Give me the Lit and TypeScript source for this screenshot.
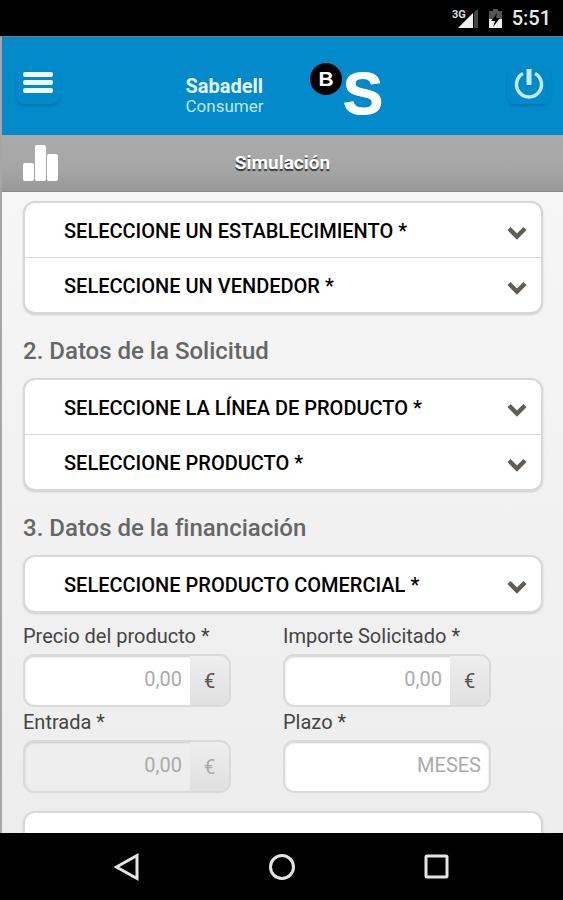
import { LitElement, html, css, svg } from "lit";
import { customElement, property } from "lit/decorators.js";

@customElement("select-row")
class SelectRow extends LitElement {
  @property() text = "";

  static styles = css`
    :host {
      display: block;
    }
    .row {
      display: grid;
      grid-template-columns: 1fr auto;
      align-items: center;
    }
    .select {
      grid-area: 1 / 1 / 2 / 3;
      appearance: none;
      width: 100%;
      height: 54px;
      margin: 0;
      padding: 1px 56px 0 39px;
      border: 0;
      background: transparent;
      color: #000;
      font: 500 20px Roboto, sans-serif;
    }
    .arrow {
      grid-area: 1 / 2 / 2 / 3;
      z-index: 1;
      margin: 6px 14px 0 0;
      pointer-events: none;
    }
  `;

  render() {
    return html`
      <div class="row">
        <select class="select" aria-label=${this.text}>
          <option>${this.text}</option>
        </select>
        <svg class="arrow" width="20" height="14" viewBox="0 0 20 14" aria-hidden="true">
          <path d="M2 2.500 L10 10.500 L18 2.500" fill="none" stroke="#625e57" stroke-width="4.500" />
        </svg>
      </div>
    `;
  }
}

@customElement("amount-field")
class AmountField extends LitElement {
  @property() label = "";
  @property() hint = "0,00";
  @property() unit = "";
  @property({ type: Boolean }) disabled = false;

  static styles = css`
    :host {
      display: block;
    }
    .label {
      display: block;
      color: #444;
      font: 400 20px/30px Roboto, sans-serif;
    }
    .box {
      display: flex;
      box-sizing: border-box;
      width: 80%;
      height: 53px;
      margin: 3px 0 0;
      border: 2px solid #dadada;
      border-radius: 11px;
      background: #fff;
      overflow: hidden;
      box-shadow: inset 0 1px 2px #ccc;
    }
    .box.off {
      background: #eee;
    }
    .input {
      flex: 1;
      min-width: 0;
      padding: 0 8px 4px;
      border: 0;
      background: transparent;
      text-align: right;
      font: 400 20px Roboto, sans-serif;
    }
    .input::placeholder {
      color: #aaa;
      opacity: 1;
    }
    .unit {
      display: grid;
      place-items: center;
      width: 39px;
      background: linear-gradient(#eee, #e0e0e0);
      color: #555;
      font: 400 20px Roboto, sans-serif;
    }
    .off .unit {
      color: #aaa;
    }
  `;

  render() {
    return html`
      <label class="label" for="value">${this.label}</label>
      <div class="box ${this.disabled ? "off" : ""}">
        <input class="input" id="value" type="text" placeholder=${this.hint} ?disabled=${this.disabled} />
        ${this.unit ? html`<span class="unit">${this.unit}</span>` : ""}
      </div>
    `;
  }
}

@customElement("app-root")
class AppRoot extends LitElement {
  static styles = css`
    :host {
      display: flex;
      flex-direction: column;
      height: 100vh;
      background: #000;
      font-family: Roboto, sans-serif;
    }
    .status {
      display: flex;
      justify-content: flex-end;
      align-items: center;
      height: 36px;
      padding-right: 12px;
      color: #e8e8e8;
      font-size: 20px;
      font-weight: 500;
    }
    .status-icons {
      margin-right: 9px;
    }
    .app {
      flex: 1;
      min-height: 0;
      display: flex;
      flex-direction: column;
      overflow: hidden;
      border-left: 2px solid #a6a6a6;
      border-top: 1px solid #777;
      background: linear-gradient(#f8f8f8, #ededed);
    }
    .header {
      flex: none;
      display: flex;
      justify-content: space-between;
      align-items: center;
      box-sizing: border-box;
      height: 98px;
      padding: 0 12px 0 14px;
      background: #028aca;
    }
    .icon-button {
      display: grid;
      place-items: center;
      width: 44px;
      height: 36px;
      padding: 0;
      border: 0;
      border-radius: 8px;
      background: #0289c8;
      box-shadow: 0 2px 2px #0278b0;
    }
    .logo {
      display: flex;
      align-items: flex-end;
      gap: 46px;
    }
    .brand {
      display: flex;
      flex-direction: column;
      font-size: 17px;
      line-height: 20px;
      color: #c4e8fb;
    }
    .brand-name {
      font-size: 20px;
      color: #e6f6ff;
    }
    .emblem {
      overflow: visible;
    }
    .title-bar {
      flex: none;
      display: grid;
      grid-template-columns: 60px 1fr 60px;
      align-items: center;
      height: 57px;
      box-sizing: border-box;
      border-bottom: 1px solid #888;
      background: linear-gradient(#ababab, #a6a6a6 60%, #989898);
    }
    .chart {
      margin-left: 21px;
    }
    .title {
      margin: 0;
      text-align: center;
      color: #fff;
      font-size: 19px;
      font-weight: 700;
      line-height: 24px;
      text-shadow: 0 2px 1px #333;
    }
    .content {
      padding: 9px 20px 0 21px;
    }
    .card {
      border: 2px solid #d8d8d8;
      border-radius: 12px;
      background: #fff;
      box-shadow: 0 1px 2px #ccc;
    }
    .card select-row + select-row {
      border-top: 1px solid #d8d8d8;
    }
    .heading {
      margin: 19px 0 8px;
      color: #666;
      font-size: 24px;
      font-weight: 500;
      line-height: 37px;
      font-variant-ligatures: none;
    }
    .fields {
      display: grid;
      grid-template-columns: repeat(2, minmax(0, 1fr));
      margin: 8px 0 18px;
    }
    .nav {
      flex: none;
      display: flex;
      justify-content: center;
      align-items: center;
      gap: 115px;
      height: 67px;
    }
    .nav-button {
      width: 40px;
      height: 40px;
      padding: 0;
      border: 0;
      background: none;
    }
  `;

  private navIcon(name: string, shape: unknown) {
    return html`
      <button class="nav-button" aria-label=${name}>
        <svg width="40" height="40" viewBox="0 0 40 40" fill="none" stroke="#e4e4e4" stroke-width="3">${shape}</svg>
      </button>
    `;
  }

  render() {
    return html`
      <div class="status">
        <svg class="status-icons" width="52" height="24" viewBox="0 0 52 24" aria-hidden="true">
          <path d="M22 7 V22 H7 Z" fill="#eee" />
          <path d="M23 6 L27 3 V22 H23 Z" fill="#444" />
          <text x="1" y="12" fill="#ddd" font-size="11" font-weight="700">3G</text>
          <path d="M38 5 H42 V3 H47 V5 H51 V13 H38 Z" fill="#555" />
          <path d="M38 13 H51 V22 H38 Z" fill="#eee" />
          <path d="M46 7 L40 15 H44 L42 21 L49 12 H45 Z" fill="#000" />
        </svg>
        <span>5:51</span>
      </div>
      <div class="app">
        <header class="header">
          <button class="icon-button" aria-label="Menú">
            <svg width="30" height="30" viewBox="0 0 30 30" fill="#eef8ff">
              <rect y="1" width="30" height="5" rx="2" />
              <rect y="9" width="30" height="5" rx="2" />
              <rect y="17" width="30" height="5" rx="2" />
            </svg>
          </button>
          <div class="logo">
            <div class="brand">
              <strong class="brand-name">Sabadell</strong>
              <span>Consumer</span>
            </div>
            <svg class="emblem" width="72" height="60" viewBox="0 0 72 60" font-family="Liberation Sans, sans-serif" font-weight="700" fill="#fff">
              <circle cx="17" cy="23" r="16" fill="#000" />
              <text x="17" y="30" font-size="21" text-anchor="middle">B</text>
              <text x="54" y="58" font-size="60" text-anchor="middle" stroke="#fff">S</text>
            </svg>
          </div>
          <button class="icon-button" aria-label="Salir">
            <svg width="32" height="36" viewBox="0 0 32 36" fill="none" stroke="#c4ebfc">
              <path d="M10 5.500 A12.500 12.500 0 1 0 22 5.500" stroke-width="3.500" />
              <path d="M16 1 V17" stroke-width="5" />
            </svg>
          </button>
        </header>
        <div class="title-bar">
          <svg class="chart" width="36" height="36" viewBox="0 0 36 36" fill="#fff" aria-hidden="true">
            <rect y="18" width="11" height="18" rx="2" />
            <rect x="12" width="11" height="36" rx="2" />
            <rect x="24" y="9" width="11" height="27" rx="2" />
          </svg>
          <h1 class="title">Simulación</h1>
        </div>
        <main class="content">
          <div class="card">
            <select-row text="SELECCIONE UN ESTABLECIMIENTO *"></select-row>
            <select-row text="SELECCIONE UN VENDEDOR *"></select-row>
          </div>
          <h2 class="heading">2. Datos de la Solicitud</h2>
          <div class="card">
            <select-row text="SELECCIONE LA LÍNEA DE PRODUCTO *"></select-row>
            <select-row text="SELECCIONE PRODUCTO *"></select-row>
          </div>
          <h2 class="heading">3. Datos de la financiación</h2>
          <div class="card">
            <select-row text="SELECCIONE PRODUCTO COMERCIAL *"></select-row>
          </div>
          <div class="fields">
            <amount-field label="Precio del producto *" unit="€"></amount-field>
            <amount-field label="Importe Solicitado *" unit="€"></amount-field>
            <amount-field label="Entrada *" unit="€" disabled></amount-field>
            <amount-field label="Plazo *" hint="MESES"></amount-field>
          </div>
          <div class="card">
            <select-row></select-row>
          </div>
        </main>
      </div>
      <nav class="nav">
        ${this.navIcon("Atrás", svg`<path d="M30 8.500 V31.500 L9.500 20 Z" />`)}
        ${this.navIcon("Inicio", svg`<circle cx="20" cy="20" r="11.500" />`)}
        ${this.navIcon("Recientes", svg`<rect x="9" y="9" width="21" height="21" rx="1" />`)}
      </nav>
    `;
  }
}
